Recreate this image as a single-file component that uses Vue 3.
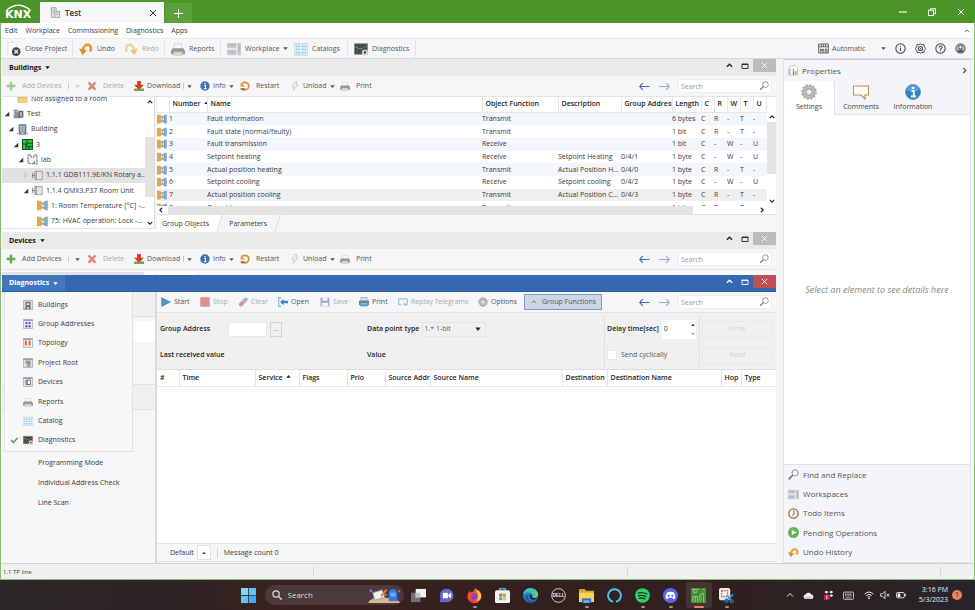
<script setup>
import { ref } from 'vue'

const ribbon = [
  { icon: 'close-project', label: 'Close Project', line: true },
  { icon: 'undo', label: 'Undo' },
  { icon: 'redo', label: 'Redo', off: true, line: true },
  { icon: 'printer', label: 'Reports', line: true },
  { icon: 'workspace', label: 'Workplace', drop: true },
  { icon: 'catalog', label: 'Catalogs', line: true },
  { icon: 'scope', label: 'Diagnostics', line: true },
]
const deviceTools = (canAdd) => [
  { icon: 'plus', label: 'Add Devices', off: !canAdd, split: true },
  { icon: 'delete', label: 'Delete', off: true },
  { icon: 'download', label: 'Download', split: true, tight: true },
  { icon: 'info', label: 'Info', drop: true, tight: true },
  { icon: 'restart', label: 'Restart' },
  { icon: 'bolt', label: 'Unload', drop: true, tight: true },
  { icon: 'printer', label: 'Print' },
]
const monitorTools = [
  { icon: 'play', label: 'Start', tight: true },
  { icon: 'stop', label: 'Stop', off: true, tight: true },
  { icon: 'eraser', label: 'Clear', off: true, tight: true },
  { icon: 'open', label: 'Open', tight: true },
  { icon: 'save', label: 'Save', off: true, tight: true },
  { icon: 'print-blue', label: 'Print', tight: true },
  { icon: 'replay', label: 'Replay Telegrams', off: true, tight: true },
  { icon: 'gear', label: 'Options', tight: true },
]
const tree = [
  { level: 1, icon: 'folder', label: 'Not assigned to a room' },
  { level: 0, icon: 'project', label: 'Test', state: 'open' },
  { level: 1, icon: 'building', label: 'Building', state: 'open' },
  { level: 2, icon: 'floor', label: '3', state: 'open' },
  { level: 3, icon: 'room', label: 'lab', state: 'open' },
  { level: 4, icon: 'device', label: '1.1.1 GDB111.9E/KN Rotary a...', state: 'closed', picked: true },
  { level: 4, icon: 'device', label: '1.1.4 QMX3.P37 Room Unit', state: 'open' },
  { level: 5, icon: 'object', label: '1: Room Temperature [°C] -...' },
  { level: 5, icon: 'object', label: '75: HVAC operation: Lock -...' },
]
const objects = [
  ['1', 'Fault information', 'Transmit', '', '', '6 bytes', 'C', 'R', '-', 'T', '-'],
  ['2', 'Fault state (normal/faulty)', 'Transmit', '', '', '1 bit', 'C', 'R', '-', 'T', '-'],
  ['3', 'Fault transmission', 'Receive', '', '', '1 bit', 'C', '-', 'W', '-', 'U'],
  ['4', 'Setpoint heating', 'Receive', 'Setpoint Heating', '0/4/1', '1 byte', 'C', '-', 'W', '-', 'U'],
  ['5', 'Actual position heating', 'Transmit', 'Actual Position H...', '0/4/0', '1 byte', 'C', 'R', '-', 'T', '-'],
  ['6', 'Setpoint cooling', 'Receive', 'Setpoint cooling', '0/4/2', '1 byte', 'C', '-', 'W', '-', 'U'],
  ['7', 'Actual position cooling', 'Transmit', 'Actual Position C...', '0/4/3', '1 byte', 'C', 'R', '-', 'T', '-'],
  ['8', 'Override', 'Transmit', '', '', '1 bit', 'C', 'R', '-', 'T', '-'],
]
const objectHeads = ['Number', 'Name', 'Object Function', 'Description', 'Group Address', 'Length', 'C', 'R', 'W', 'T', 'U']
const objectCols = ['w-icon', 'w-num', '', 'w-func', 'w-desc', 'w-addr', 'w-len', 'w-flag', 'w-flag', 'w-flag', 'w-flag', 'w-flag', 'w-rest']
const busHeads = [
  ['#', 'b-idx'], ['Time', 'b-time'], ['Service', 'b-serv'], ['Flags', 'b-flags'], ['Prio', 'b-prio'],
  ['Source Address', 'b-addr'], ['Source Name', 'b-name'], ['Destination', 'b-addr'],
  ['Destination Name', ''], ['Hop', 'b-hop'], ['Type', 'b-type'],
]
const views = [
  ['v-buildings', 'Buildings'], ['v-groups', 'Group Addresses'], ['v-topology', 'Topology'], ['v-root', 'Project Root'],
  ['v-devices', 'Devices'], ['printer', 'Reports'], ['catalog', 'Catalog'], ['scope', 'Diagnostics'],
]
const sideTabs = [['gear', 'Settings'], ['comment', 'Comments'], ['info-ball', 'Information']]
const sideLinks = [
  ['magnifier', 'Find and Replace'], ['workspace', 'Workspaces'], ['clock', 'Todo Items'],
  ['pending', 'Pending Operations'], ['undo', 'Undo History'],
]
const apps = [
  ['t-tasks', ''], ['t-chat', ''], ['t-firefox', 'run'], ['t-store', ''], ['t-edge', ''], ['t-dell', ''],
  ['t-files', 'run'], ['t-ring', ''], ['t-spotify', 'run'], ['t-discord', 'run'], ['t-ets', 'front'], ['t-snip', 'run'],
]
const delay = ref('0')
const groupAddress = ref('')
</script>

<template>
  <svg class="sprites" aria-hidden="true">
    <symbol id="close-project" viewBox="0 0 16 16"><path d="M1 .5h7l3 3V14H1z" fill="#fff" stroke="#dcdcdc"/><circle cx="10.500" cy="11" r="5" fill="#484848"/><path d="M8.500 9l4 4m0-4l-4 4" stroke="#fff" stroke-width="1.500"/></symbol>
    <symbol id="undo" viewBox="0 0 16 16"><path d="M4.500 9C5 4.500 8 2.500 11 3.500c3 1 3.500 4 1.500 7.500" fill="none" stroke="#e59a35" stroke-width="3"/><path d="M0 7.500l9 1.800L4 15z" fill="#df8f2c"/><path d="M4 6.500C5.500 2.500 9 1 12 2.200" fill="none" stroke="#f2bd6c"/></symbol>
    <symbol id="redo" viewBox="0 0 16 16"><path d="M11.500 9C11 4.500 8 2.500 5 3.500 2 4.500 1.500 7.500 3.500 11" fill="none" stroke="#f4d3a6" stroke-width="3"/><path d="M16 7.500L7 9.300 12 15z" fill="#eec28a"/></symbol>
    <symbol id="printer" viewBox="0 0 16 16"><path d="M4 2h8l1 6H3z" fill="#f8f8f8" stroke="#c4c4c4" stroke-width=".7"/><path d="M2 7h12l2 3v4h-3v-3H3v3H0v-4z" fill="#989898"/><path d="M4 12h8l1 3H3z" fill="#e2e2e2" stroke="#a5a5a5" stroke-width=".6"/><path d="M12 8.500h2" stroke="#69a869"/></symbol>
    <symbol id="workspace" viewBox="0 0 16 16"><path d="M0 1h11v6H0zM0 8.500h11V15H0zM12 1h4v14h-4z" fill="#c9cbcd"/><path d="M2 3.500h7M2 11.500h7M13.500 3v9" stroke="#a3a6a9"/></symbol>
    <symbol id="catalog" viewBox="0 0 16 16"><path d="M0 2h7l1 1 1-1h7v13H9l-1-1-1 1H0z" fill="#e6f4fb" stroke="#a8bcc8" stroke-width=".8"/><path d="M2 4h2v2H2zm3 0h2v2H5zM2 7.500h2v2H2zm3 0h2v2H5zM2 11h2v2H2zm3 0h2v2H5zm4-7h2v2H9zm3 0h2v2h-2zM9 7.500h2v2H9zm3 0h2v2h-2zM9 11h2v2H9zm3 0h2v2h-2z" fill="#85caef"/></symbol>
    <symbol id="scope" viewBox="0 0 16 16"><path d="M.5 2h15v12H.5z" fill="#3f4341" stroke="#888"/><path d="M1 10h14M4 3v10M8 3v10" stroke="#656a66" stroke-width=".6"/><path d="M1 7l2-2 2 3 2-1 2 1 3-3 3 1" fill="none" stroke="#66b35b"/><circle cx="12.500" cy="12" r="3.500" fill="#d5d5d5"/><circle cx="12.500" cy="12" r="1.300" fill="#333"/></symbol>
    <symbol id="plus" viewBox="0 0 16 16"><path d="M6 1h4v5h5v4h-5v5H6v-5H1V6h5z" fill="#62ad4a"/></symbol>
    <symbol id="delete" viewBox="0 0 16 16"><path d="M1 3l3-2 4 4 4-4 3 2-4 5 4 5-3 2-4-4-4 4-3-2 4-5z" fill="#d83e2b"/></symbol>
    <symbol id="download" viewBox="0 0 16 16"><path d="M0 12h16v4H0z" fill="#7ba548"/><path d="M5 0h6v6h5l-8 8-8-8h5z" fill="#d93a24"/></symbol>
    <symbol id="info" viewBox="0 0 16 16"><circle cx="8" cy="8" r="7.500" fill="#3f70b7"/><path d="M6.500 7h2.300v5M6 12.300h4.500M7 4h2" stroke="#fff" stroke-width="1.700" fill="none"/></symbol>
    <symbol id="restart" viewBox="0 0 16 16"><path d="M3 4.500C6 1 13 1.500 14 7c.5 4-2 7-6 7" fill="none" stroke="#d89443" stroke-width="2.800"/><path d="M1 2v7h7z" fill="#e0a04f"/><path d="M1 11h7v4H3l-2-1z" fill="#b5762f"/></symbol>
    <symbol id="bolt" viewBox="0 0 16 16"><path d="M7 1L3 9h4l-2 6 8-9H9l2-5z" fill="#f6f7f8" stroke="#b4b8bb"/></symbol>
    <symbol id="play" viewBox="0 0 16 16"><path d="M1 1l14 7-14 7z" fill="#4a97c9" stroke="#3d80b0"/></symbol>
    <symbol id="stop" viewBox="0 0 16 16"><path d="M1 1h14v14H1z" fill="#d64950" stroke="#b94b50"/></symbol>
    <symbol id="eraser" viewBox="0 0 16 16"><path d="M1 11l5-5 5 4-5 5H3z" fill="#d45450"/><path d="M6 6l5-5h3l2 3-5 6z" fill="#5c8cc0"/></symbol>
    <symbol id="open" viewBox="0 0 16 16"><path d="M5 1H1v14h4" fill="none" stroke="#8cbce2" stroke-width="2"/><path d="M3.500 8L9 3v3h7v4H9v3z" fill="#3d82b8"/></symbol>
    <symbol id="save" viewBox="0 0 16 16"><path d="M1 1h13l1 1v13H1z" fill="#6470b9"/><path d="M4 1h8v5H4zM3 9h10v6H3z" fill="#f3f4fa"/></symbol>
    <symbol id="print-blue" viewBox="0 0 16 16"><path d="M3 1h10v5H3z" fill="#dde8ee" stroke="#7891a0"/><path d="M0 6h16v7H0z" fill="#6b7e8b"/><path d="M2 9h12v6H2z" fill="#4b9dc9"/><path d="M3 11h10" stroke="#d7edf8"/></symbol>
    <symbol id="replay" viewBox="0 0 16 16"><path d="M5 12H2q-1 0-1-1V4q0-1 1-1h12q1 0 1 1v7q0 1-1 1h-3" fill="none" stroke="#62add6" stroke-width="2"/><path d="M12 8v7l-4-3z" fill="#62add6"/></symbol>
    <symbol id="gear" viewBox="0 0 16 16"><circle cx="8" cy="8" r="7" fill="none" stroke="#a5a5a5" stroke-width="1.600" stroke-dasharray="2.200 1.465"/><circle cx="8" cy="8" r="4.600" fill="none" stroke="#a9a9a9" stroke-width="4"/><circle cx="8" cy="8" r="4.600" fill="none" stroke="#c4c4c4" stroke-width="1.400"/><circle cx="8" cy="8" r="2.500" fill="#fafafa" stroke="#9a9a9a" stroke-width=".6"/></symbol>
    <symbol id="comment" viewBox="0 0 16 16"><path d="M.5 2h15v9H12v4l-4-4H.5z" fill="#fffaf0" stroke="#bd8b58" stroke-width="1.100"/></symbol>
    <symbol id="info-ball" viewBox="0 0 16 16"><circle cx="8" cy="8" r="7.500" fill="#2f83c7" stroke="#6f98ba"/><path d="M2 6a6.300 6.300 0 0112 0q-6 3-12 0z" fill="#5aa3d8"/><path d="M6.500 7h2.300v5.500M6 12.500h5" stroke="#fff" stroke-width="1.800" fill="none"/><circle cx="8" cy="4" r="1.300" fill="#fff"/></symbol>
    <symbol id="magnifier" viewBox="0 0 16 16"><circle cx="10.300" cy="5.700" r="4.500" fill="#f7f8f8" stroke="#8c827c" stroke-width="1.300"/><path d="M7 9l-6 6" stroke="#927a66" stroke-width="2.500"/></symbol>
    <symbol id="search" viewBox="0 0 16 16"><circle cx="10.300" cy="5.700" r="4.500" fill="none" stroke="#777" stroke-width="1.200"/><path d="M7 9l-5 5" stroke="#777" stroke-width="2"/></symbol>
    <symbol id="clock" viewBox="0 0 16 16"><circle cx="8" cy="8" r="6.800" fill="#faf5e6" stroke="#947449" stroke-width="2"/><path d="M8.500 3.500V9L6 11" fill="none" stroke="#6e5a40" stroke-width="1.300"/></symbol>
    <symbol id="pending" viewBox="0 0 16 16"><circle cx="8" cy="8" r="8" fill="#68b25e"/><path d="M5.500 4.500l7 3.500-7 3.500z" fill="#fff"/></symbol>
    <symbol id="props" viewBox="0 0 16 16"><path d="M3 1h8l3 3v11H3z" fill="#fbfbfb" stroke="#bbb"/><path d="M0 5h4v10H0z" fill="#c5cbd1"/><path d="M7 6h2v2H7zm0 3h2v5H7z" fill="#3b7fc0"/><path d="M10 9h3v5h-3z" fill="#d8a965"/></symbol>
    <symbol id="folder" viewBox="0 0 16 16"><path d="M1 3h5l2 2h7v9H1z" fill="#e2ae52"/><path d="M4 7h12l-2 8H1z" fill="#f4cf86"/></symbol>
    <symbol id="project" viewBox="0 0 16 16"><path d="M1 2h6v4h3v9H1z" fill="#8e9295"/><path d="M2 4h1v2H2zm3 0h1v2H5zM2 8h1v2H2z" fill="#e1e5e8"/><path d="M8 4h7v10H8z" fill="#59616a"/><path d="M10 6h3v6h-3z" fill="#a9c4b6"/></symbol>
    <symbol id="building" viewBox="0 0 16 16"><path d="M3 1h10v14H3z" fill="#7e8da0" stroke="#5e6a78"/><path d="M5 3h2v2H5zm4 0h2v2H9zM5 6h2v2H5zm4 0h2v2H9zM5 9h2v2H5zm4 0h2v2H9zM7 12h2v3H7z" fill="#dfe8f2"/><path d="M0 13h2v2H0zm14 0h2v2h-2z" fill="#79b27c"/></symbol>
    <symbol id="floor" viewBox="0 0 16 16"><path d="M0 0h16v16H0z" fill="#125a20"/><path d="M1.500 1.500h5v5h-5zm6.500 0h6.500v4H8zM1.500 8H5v6.500H1.500zM8 7h6.500v3H8zm-1.500 5h3v2.500h-3zm5 0h3v2.500h-3z" fill="#32c04a"/></symbol>
    <symbol id="room" viewBox="0 0 16 16"><path d="M1.500 1.500H6v3h4v-3h4.500v13H11v-3l-3 3-6.500-1z" fill="#f1f1f1" stroke="#777" stroke-width="1.500" stroke-dasharray="4 1"/></symbol>
    <symbol id="device" viewBox="0 0 16 16"><path d="M4 2h11v12H4z" fill="#e3e3e3" stroke="#8b8b8b"/><path d="M1 4v8M4 8H0M6 2v12" stroke="#777" stroke-width="1.300"/></symbol>
    <symbol id="object" viewBox="0 0 16 16"><path d="M0 1h6v2h3v3H7v4h2v3H6v2H0z" fill="#e0a84a"/><path d="M16 1h-4l-3 3v2h2v4H9v2l3 3h4z" fill="#8fb0d8"/><path d="M9 4v8M12 2v12" stroke="#6485b4"/></symbol>
    <symbol id="v-buildings" viewBox="0 0 16 16"><path d="M.5 1h15v14H.5z" fill="#d9dbdd" stroke="#8c9196"/><path d="M4 3h8v12H4z" fill="#6c727a"/><path d="M6 5h4v3H6zm1 6h2v4H7z" fill="#e8edf1"/><path d="M1 13h3v2H1z" fill="#71a876"/></symbol>
    <symbol id="v-groups" viewBox="0 0 16 16"><path d="M.5 1h15v14H.5z" fill="#eef0fb" stroke="#8c9196"/><path d="M.5 1h15v2H.5z" fill="#8c98ae"/><path d="M4 5h3v3H4zm5 0h3v3H9zm-5 5h3v3H4zm5 0h3v3H9z" fill="#3237e2"/></symbol>
    <symbol id="v-topology" viewBox="0 0 16 16"><path d="M.5 1h15v14H.5z" fill="#f3eeee" stroke="#8c9196"/><path d="M.5 1h15v2H.5z" fill="#8c98ae"/><path d="M3 4h3v8H3zm6 0h3v8H9z" fill="#e2622d"/></symbol>
    <symbol id="v-root" viewBox="0 0 16 16"><path d="M.5 1h15v14H.5z" fill="#dfe1e3" stroke="#8c9196"/><path d="M.5 1h15v2H.5z" fill="#8c98ae"/><path d="M4 5h8M4 7h8M6 9h6M6 11h6M6 13h6" stroke="#5f6469" stroke-width="1.200"/></symbol>
    <symbol id="v-devices" viewBox="0 0 16 16"><path d="M.5 1h15v14H.5z" fill="#e8e9ea" stroke="#8c9196"/><path d="M.5 1h15v2H.5z" fill="#8c98ae"/><path d="M5 5h7v7H5zM5 8H3M7 5v7" fill="#fff" stroke="#4b4f53" stroke-width="1.200"/></symbol>
    <symbol id="check" viewBox="0 0 16 16"><path d="M2 8l5 5L15 4" fill="none" stroke="#4d9d38" stroke-width="3"/></symbol>
    <symbol id="arrow-left" viewBox="0 0 16 16"><path d="M15.500 8H1m4.500-5L1 8l4.500 5" fill="none" stroke="#3c6dbb" stroke-width="1.700"/></symbol>
    <symbol id="arrow-right" viewBox="0 0 16 16"><path d="M.5 8H15m-4.500-5L15 8l-4.500 5" fill="none" stroke="#8da9d8" stroke-width="1.700"/></symbol>
    <symbol id="chevron-up" viewBox="0 0 16 16"><path d="M2 11l6-6 6 6" fill="none" stroke="currentColor" stroke-width="3"/></symbol>
    <symbol id="chevron-thin" viewBox="0 0 16 16"><path d="M2 11l6-6 6 6" fill="none" stroke="currentColor" stroke-width="2"/></symbol>
    <symbol id="chevron-right" viewBox="0 0 16 16"><path d="M5 2l6 6-6 6" fill="none" stroke="currentColor" stroke-width="3"/></symbol>
    <symbol id="chevron-left" viewBox="0 0 16 16"><path d="M11 2L5 8l6 6" fill="none" stroke="currentColor" stroke-width="3"/></symbol>
    <symbol id="chevron-down" viewBox="0 0 16 16"><path d="M2 5l6 6 6-6" fill="none" stroke="currentColor" stroke-width="3"/></symbol>
    <symbol id="box" viewBox="0 0 16 16"><path d="M2 4h12v9H2zM2 5h12" fill="none" stroke="currentColor" stroke-width="1.800"/></symbol>
    <symbol id="cross" viewBox="0 0 16 16"><path d="M2 2l12 12M14 2L2 14" stroke="currentColor" stroke-width="2"/></symbol>
    <symbol id="tri-down" viewBox="0 0 16 16"><path d="M1 4h14l-7 9z" fill="currentColor"/></symbol>
    <symbol id="tri-up" viewBox="0 0 16 16"><path d="M1 12h14L8 3z" fill="currentColor"/></symbol>
    <symbol id="node-open" viewBox="0 0 16 16"><path d="M14 2v12H2z" fill="#333"/></symbol>
    <symbol id="node-closed" viewBox="0 0 16 16"><path d="M4 2l8 6-8 6z" fill="none" stroke="#bbb" stroke-width="1.500"/></symbol>
    <symbol id="minimize" viewBox="0 0 16 16"><path d="M0 8h16" stroke="#e5f0df" stroke-width="2.500"/></symbol>
    <symbol id="restore" viewBox="0 0 16 16"><path d="M1 4.500h10V15H1zM5 4V1.500h10v10h-3" fill="none" stroke="#f1f7ee" stroke-width="2.200"/></symbol>
    <symbol id="tab-doc" viewBox="0 0 16 16"><path d="M2 15V1h7v4M2 15h12V6H7v9" fill="#e4e4e4" stroke="#999" stroke-width="1.200"/><path d="M4 4h3M4 7h2M4 10h2m3-2h3m-3 3h3" stroke="#888"/></symbol>
    <symbol id="auto" viewBox="0 0 16 16"><path d="M1 1.500h14v13H1zM1 5.500h14M5 2v3M8 2v3M11 2v3M4 14V8.500l2 3 1.500-3V14m3 0V9h2.500v5" fill="none" stroke="#444" stroke-width="1.200"/></symbol>
    <symbol id="ring-info" viewBox="0 0 16 16"><circle cx="8" cy="8" r="6.800" fill="none" stroke="#444" stroke-width="1.500"/><path d="M8 7v5M8 4v1.600" stroke="#444" stroke-width="1.600"/></symbol>
    <symbol id="ring-gear" viewBox="0 0 16 16"><path d="M8 1l2 1.500 3-.3.500 3L15.500 8l-2 2.800-.5 3-3-.3L8 15l-2-1.500-3 .3-.5-3L.5 8l2-2.800.5-3 3 .3z" fill="none" stroke="#444" stroke-width="1.400"/><circle cx="8" cy="8" r="3" fill="none" stroke="#444" stroke-width="1.500"/><circle cx="8" cy="8" r="1" fill="#555"/></symbol>
    <symbol id="ring-help" viewBox="0 0 16 16"><circle cx="8" cy="8" r="6.800" fill="none" stroke="#444" stroke-width="1.500"/><path d="M5.800 6.500c0-3 4.500-3 4.500-.3C10.300 8 8 8 8 9.800M8 11v1.500" fill="none" stroke="#444" stroke-width="1.500"/></symbol>
    <symbol id="ring-user" viewBox="0 0 16 16"><circle cx="8" cy="8" r="7" fill="#999" stroke="#555"/><path d="M3.500 13.500c0-5 9-5 9 0z" fill="#555"/><circle cx="8" cy="6" r="2.500" fill="#eee" stroke="#444"/><path d="M3.500 5v5M12.500 5v5" stroke="#ddd"/></symbol>

    <symbol id="t-start" viewBox="0 0 16 16"><path d="M0 0h7.600v7.600H0z" fill="#7fd6fb"/><path d="M8.400 0H16v7.600H8.400zM0 8.400h7.600V16H0z" fill="#5fc3f7"/><path d="M8.400 8.400H16V16H8.400z" fill="#40a7f0"/></symbol>
    <symbol id="t-search" viewBox="0 0 16 16"><circle cx="6.500" cy="6.500" r="5" fill="none" stroke="#e0dada" stroke-width="2"/><path d="M10.500 10.500l5 5" stroke="#e0dada" stroke-width="2.200"/></symbol>
    <symbol id="t-art" viewBox="0 0 36 16"><path d="M0 15q7-6 14-4 9-2 19 3l1 2H1z" fill="#dcb98c"/><path d="M5 5l10-3 3 8-11 3z" fill="#eef1ef" stroke="#8ba08e"/><path d="M13 8l6-7 1.500 1.500-6 7z" fill="#ec7c3e"/><path d="M22 6q0-4 3-5h3q3 1 3 5v8h-9z" fill="#3279ec"/><path d="M24 5h5v4h-5z" fill="#70b0f9"/><path d="M1 3l2-2 2 2-2 2z" fill="#b35ae0"/><path d="M32 2l2 1-1 2z" fill="#e9a93c"/><circle cx="19" cy="7" r="1" fill="#59c7e8"/></symbol>
    <symbol id="t-tasks" viewBox="0 0 16 16"><path d="M0 5h10v10H0z" fill="#747171"/><path d="M5 1h11v9H5z" fill="#f3f3f3"/><path d="M5 5h5v5H5z" fill="#c2c1c1"/></symbol>
    <symbol id="t-chat" viewBox="0 0 16 16"><path d="M1 15l.5-4A7.300 7.300 0 118 15.300z" fill="#6767cf"/><rect x="4" y="5" width="5.500" height="6" rx="1" fill="#fff"/><path d="M10 7l3-2v6l-3-2z" fill="#fff"/></symbol>
    <symbol id="t-firefox" viewBox="0 0 16 16"><path d="M8 16C3 16 .3 12.500.5 8.500.6 6 2 4 3 3l.5 2C5 3.500 6.500 4 7 4c0-2 1-3 2.500-4 .5 2 1.500 2 2.500 3.500L13 3c2 2 2.500 4 2.500 5.500C15.500 13 12 16 8 16z" fill="#f9502f"/><path d="M10 1c3 3 5.500 4 5 8-1 5-5 6-8 5 4 0 5-3 5-5 0-3-2-4-2-8z" fill="#ffc936"/><circle cx="7.500" cy="9" r="3.500" fill="#8843c7"/><path d="M2 11c3 4 8 3 10 1-1 3-8 5-10-1z" fill="#e3266c"/></symbol>
    <symbol id="t-store" viewBox="0 0 16 16"><path d="M5 3V.8h6V3" fill="none" stroke="#4cabdd" stroke-width="1.500"/><rect y="2.500" width="16" height="13.500" rx="2" fill="#f3f3f2"/><path d="M4.500 6h3.200v3.200H4.500z" fill="#ec5330"/><path d="M8.300 6h3.200v3.200H8.300z" fill="#80bc2b"/><path d="M4.500 9.800h3.200V13H4.500z" fill="#32a6e8"/><path d="M8.300 9.800h3.200V13H8.300z" fill="#fbbc27"/></symbol>
    <symbol id="t-edge" viewBox="0 0 16 16"><circle cx="8" cy="8" r="8" fill="#1982c9"/><path d="M0 7C1 1 6 0 8 0c5 0 8 4 8 7 0 2-2 4-5 3-2 0-2-1-1-2 0-3-5-5-10-1z" fill="#3cc3b4"/><path d="M12 1c3 2 4 4 4 6 0 3-3 4-5 3 3-2 2-6 1-9z" fill="#68d75a"/><path d="M6 7c-2 4 1 9 8 6-3 4-9 4-11-1-.5-3 1-4 3-5z" fill="#105ba6"/><path d="M8 7c1-.5 2 0 2 1-1 1-1 2 1 2.500 1 .5 3 0 4-.5-1 2-3 3-5 2.500C7 12 6.500 8.500 8 7z" fill="#332321"/></symbol>
    <symbol id="t-dell" viewBox="0 0 16 16"><circle cx="8" cy="8" r="7.300" fill="none" stroke="#ddd6d4" stroke-width="1"/><text x="8" y="9.700" text-anchor="middle" font-family="Liberation Sans" font-size="5" font-weight="700" fill="#eee">DELL</text></symbol>
    <symbol id="t-files" viewBox="0 0 16 16"><path d="M0 2q0-1 1-1h5l1.500 2H16v12H0z" fill="#dca432"/><path d="M0 5h16v10H0z" fill="#ffd44d"/><path d="M3 11h10v5H3z" fill="#2978c7"/><path d="M5 13h6v3H5z" fill="#66b1ec"/></symbol>
    <symbol id="t-ring" viewBox="0 0 16 16"><path d="M6.500 14.700a6.800 6.800 0 113 0" fill="none" stroke="#51c3f2" stroke-width="2"/></symbol>
    <symbol id="t-spotify" viewBox="0 0 16 16"><circle cx="8" cy="8" r="7.800" fill="#2fd266"/><path d="M3 5.500q5-1.500 10 1M3.500 8.300q4.500-1.300 8.500 1M4 11q4-1 7 1" fill="none" stroke="#16371e" stroke-width="1.500"/></symbol>
    <symbol id="t-discord" viewBox="0 0 16 16"><circle cx="8" cy="8" r="8" fill="#5d65ee"/><path d="M4.500 4.500Q8 3.500 11.500 4.500q2 3 1.700 6.500l-2.200 1-1-1.500H6L5 12l-2.200-1Q2.500 7.500 4.500 4.500z" fill="#fff"/><circle cx="6" cy="8" r="1.200" fill="#5d65ee"/><circle cx="10" cy="8" r="1.200" fill="#5d65ee"/></symbol>
    <symbol id="t-ets" viewBox="0 0 16 16"><path d="M0 0h16v16H0z" fill="#3f8f30"/><path d="M1 1.500h7M3 1.500V5h3V3M9.500 15V7l4-1.500V15M2 15V9h5v6M4.500 9v6M11 9v1m0 2v1M13 1l2 2" fill="none" stroke="#a5d298" stroke-width=".9"/></symbol>
    <symbol id="t-snip" viewBox="0 0 16 16"><rect width="12" height="13" rx="2" fill="#ececec"/><path d="M3 3h6v6H3z" fill="#fff" stroke="#d55b49" stroke-width="1.500" stroke-dasharray="1.500 1"/><path d="M15 7l-7 6M9 8l4 6" stroke="#4aa0dc" stroke-width="1.600"/><circle cx="8" cy="13.500" r="1.700" fill="none" stroke="#2b77bb" stroke-width="1.200"/><circle cx="13.500" cy="14" r="1.500" fill="none" stroke="#2b77bb" stroke-width="1.200"/></symbol>
    <symbol id="y-cloud" viewBox="0 0 16 16"><path d="M3.500 13a3.200 3.200 0 010-6.300A5 5 0 0112 6a3.700 3.700 0 011 7z" fill="#eee"/><path d="M2 12q5-6 12 0l-1 1H3z" fill="#c9c9c9"/></symbol>
    <symbol id="y-dropbox" viewBox="0 0 16 16"><path d="M5 1l3 2-3 2-3-2zm7 0l3 2-3 2-3-2zm0 5l3 2-3 2-3-2z" fill="#f3f3f3"/><circle cx="5.500" cy="10.500" r="4.500" fill="#d91c3f"/><path d="M5.500 8v5" stroke="#fff" stroke-width="1.300"/></symbol>
    <symbol id="y-keyboard" viewBox="0 0 16 16"><rect x=".7" y="3" width="14.600" height="10.500" rx="1" fill="none" stroke="#d7d0d0" stroke-width="1.300"/><path d="M3 6h10M3 8.500h10" stroke="#d7d0d0" stroke-width="1.500" stroke-dasharray="1.500 .8"/><path d="M4 11.300h8" stroke="#d7d0d0"/></symbol>
    <symbol id="y-wifi" viewBox="0 0 16 16"><path d="M1 6.500q7-6.500 14 0M3.500 9q4.500-4.500 9 0M6 11.500q2-2 4 0" fill="none" stroke="#ece7e7" stroke-width="1.600"/><circle cx="8" cy="13.500" r="1.300" fill="#fff"/></symbol>
    <symbol id="y-mute" viewBox="0 0 16 16"><path d="M1 6h3l4-4v12l-4-4H1z" fill="none" stroke="#ece7e7" stroke-width="1.400"/><path d="M10.500 6l4.500 4.500m0-4.500l-4.500 4.500" stroke="#ece7e7" stroke-width="1.500"/></symbol>
    <symbol id="y-battery" viewBox="0 0 16 16"><rect x=".7" y="4" width="12.600" height="8.500" rx="2" fill="none" stroke="#eee" stroke-width="1.400"/><path d="M2.500 5.500H7V11H2.500zM14 6.500h1.700v3.500H14z" fill="#fff"/></symbol>
  </svg>

  <div class="screen">
    <header class="titlebar">
      <div class="logo">
        <svg class="logo-arc" viewBox="0 0 28 6"><path d="M2 6Q14-3.500 26 6" fill="none" stroke="#fff" stroke-width="1.500"/></svg>
        <span>KNX</span>
      </div>
      <div class="doc-tab">
        <svg class="i11"><use href="#tab-doc"/></svg>
        <span>Test</span>
        <button class="bare" aria-label="Close tab"><svg class="i8"><use href="#cross"/></svg></button>
      </div>
      <button class="new-tab" aria-label="New tab"><svg viewBox="0 0 10 10"><path d="M5 0v10M0 5h10" stroke="#fff" stroke-width="1.200"/></svg></button>
      <div class="win-buttons">
        <button class="bare" aria-label="Minimize"><svg class="i8"><use href="#minimize"/></svg></button>
        <button class="bare" aria-label="Restore"><svg class="i8"><use href="#restore"/></svg></button>
        <button class="bare" aria-label="Close"><svg class="i8"><use href="#cross"/></svg></button>
      </div>
    </header>

    <div class="window">
      <nav class="menubar">
        <a v-for="m in ['Edit', 'Workplace', 'Commissioning', 'Diagnostics', 'Apps']" :key="m" href="#">{{ m }}</a>
        <button class="bare push" aria-label="Collapse ribbon"><svg class="i6"><use href="#chevron-thin"/></svg></button>
      </nav>

      <div class="ribbon">
        <div class="ribbon-items">
          <button v-for="r in ribbon" :key="r.label" :class="{ off: r.off, line: r.line }">
            <svg class="i14"><use :href="'#' + r.icon"/></svg>{{ r.label }}
            <svg v-if="r.drop" class="i5"><use href="#tri-down"/></svg>
          </button>
        </div>
        <div class="ribbon-right">
          <button class="auto"><svg class="i11"><use href="#auto"/></svg>Automatic<svg class="i5 push"><use href="#tri-down"/></svg></button>
          <button v-for="g in [['ring-info', 'About'], ['ring-gear', 'Settings'], ['ring-help', 'Help'], ['ring-user', 'Account']]" :key="g[0]" class="bare" :aria-label="g[1]"><svg class="i11"><use :href="'#' + g[0]"/></svg></button>
        </div>
      </div>

      <main class="workspace">
        <div class="docks">
          <template v-for="dock in ['Buildings', 'Devices']" :key="dock">
            <section class="dock">
              <div class="dock-head">
                <button class="dock-title">{{ dock }}<svg class="i5"><use href="#tri-down"/></svg></button>
                <div class="dock-buttons">
                  <button aria-label="Collapse"><svg class="i7"><use href="#chevron-up"/></svg></button>
                  <button aria-label="Maximize"><svg class="i8"><use href="#box"/></svg></button>
                  <button class="x" aria-label="Close panel"><svg class="i7"><use href="#cross"/></svg></button>
                </div>
              </div>
              <div class="tools">
                <div class="tool-items device-tools">
                  <button v-for="t in deviceTools(dock === 'Devices')" :key="t.label" :class="{ off: t.off, tight: t.tight }">
                    <svg class="i10"><use :href="'#' + t.icon"/></svg>{{ t.label }}
                    <i v-if="t.split" class="split"></i>
                    <svg v-if="t.split || t.drop" class="i5"><use href="#tri-down"/></svg>
                  </button>
                </div>
                <div class="finder">
                  <button class="bare" aria-label="Back"><svg class="i11"><use href="#arrow-left"/></svg></button>
                  <button class="bare" aria-label="Forward"><svg class="i11"><use href="#arrow-right"/></svg></button>
                  <label class="search"><input type="text" placeholder="Search" :aria-label="'Search ' + dock"><svg class="i10"><use href="#search"/></svg></label>
                </div>
              </div>

              <div v-if="dock === 'Buildings'" class="split-view">
                <div class="tree-pane">
                  <div class="tree">
                    <div v-for="n in tree" :key="n.label" :class="['node', 'lv' + n.level, { picked: n.picked }]">
                      <svg class="i6"><use v-if="n.state" :href="'#node-' + n.state"/></svg>
                      <svg class="i11"><use :href="'#' + n.icon"/></svg>
                      <span>{{ n.label }}</span>
                    </div>
                  </div>
                  <div class="vbar"><svg class="i6"><use href="#chevron-up"/></svg><i class="tree-thumb"></i><svg class="i6"><use href="#chevron-down"/></svg></div>
                </div>
                <div class="objects-pane">
                  <div class="objects">
                    <table>
                      <colgroup><col v-for="(c, i) in objectCols" :key="i" :class="c"></colgroup>
                      <thead>
                        <tr><th></th><th v-for="h in objectHeads" :key="h" scope="col">{{ h }}<svg v-if="h === 'Number'" class="i4"><use href="#tri-up"/></svg></th><th></th></tr>
                      </thead>
                      <tbody>
                        <tr v-for="o in objects" :key="o[0]">
                          <td><svg class="i10"><use href="#object"/></svg></td>
                          <td v-for="(v, i) in o" :key="i">{{ v }}</td>
                          <td></td>
                        </tr>
                      </tbody>
                    </table>
                    <div class="vbar over"><svg class="i6"><use href="#chevron-up"/></svg><i class="table-thumb"></i><svg class="i6"><use href="#chevron-down"/></svg></div>
                  </div>
                  <div class="hbar"><svg class="i6"><use href="#chevron-left"/></svg><i></i><svg class="i6"><use href="#chevron-right"/></svg></div>
                  <div class="sheet-tabs">
                    <button class="on">Group Objects</button>
                    <svg viewBox="0 0 8 17"><path d="M0 0h7L2 17H0z" fill="#fff"/><path d="M7 0L2 17" stroke="#ddd"/></svg>
                    <button>Parameters</button>
                    <svg viewBox="0 0 8 17"><path d="M7 0L2 17" stroke="#ddd"/></svg>
                  </div>
                </div>
              </div>
              <div v-else class="peek"><i class="peek-tree"></i><i class="peek-bar"></i><i class="peek-tab"></i></div>
            </section>
          </template>

          <section class="dock active">
            <div class="dock-head">
              <button class="dock-title">Diagnostics<svg class="i5"><use href="#tri-down"/></svg></button>
              <div class="dock-buttons">
                <button aria-label="Collapse"><svg class="i7"><use href="#chevron-up"/></svg></button>
                <button aria-label="Maximize"><svg class="i8"><use href="#box"/></svg></button>
                <button class="x" aria-label="Close panel"><svg class="i7"><use href="#cross"/></svg></button>
              </div>
            </div>
            <div class="view-menu">
              <button v-for="v in views" :key="v[1]">
                <span class="tick"><svg v-if="v[1] === 'Diagnostics'" class="i8"><use href="#check"/></svg></span>
                <svg class="i10"><use :href="'#' + v[0]"/></svg>{{ v[1] }}
              </button>
            </div>
            <div class="diag">
              <aside class="diag-nav">
                <div class="nav-head"></div>
                <div class="nav-pick"></div>
                <div class="nav-gap"></div>
                <div class="nav-band"></div>
                <nav>
                  <a v-for="d in ['Programming Mode', 'Individual Address Check', 'Line Scan']" :key="d" href="#">{{ d }}</a>
                </nav>
              </aside>
              <div class="monitor">
                <div class="tools">
                  <div class="tool-items monitor-tools">
                    <button v-for="t in monitorTools" :key="t.label" :class="{ off: t.off, tight: t.tight }">
                      <svg class="i10"><use :href="'#' + t.icon"/></svg>{{ t.label }}
                    </button>
                    <button class="toggle"><svg class="i6"><use href="#chevron-thin"/></svg>Group Functions</button>
                  </div>
                  <div class="finder">
                    <button class="bare" aria-label="Back"><svg class="i11"><use href="#arrow-left"/></svg></button>
                    <button class="bare" aria-label="Forward"><svg class="i11"><use href="#arrow-right"/></svg></button>
                    <label class="search"><input type="text" placeholder="Search" aria-label="Search telegrams"><svg class="i10"><use href="#search"/></svg></label>
                  </div>
                </div>
                <div class="params">
                  <div class="cell group"><label for="ga">Group Address</label><input id="ga" v-model="groupAddress" type="text"><button class="dots">...</button></div>
                  <div class="cell"><label for="dpt">Data point type</label>
                    <span class="select"><select id="dpt"><option>1.* 1-bit</option></select><svg class="i6"><use href="#tri-down"/></svg></span>
                  </div>
                  <div class="cell ruled"><label for="delay">Delay time[sec]</label>
                    <span class="spin"><input id="delay" v-model="delay" type="text"><span><svg class="i4"><use href="#tri-up"/></svg><svg class="i4 faint"><use href="#tri-down"/></svg></span></span>
                  </div>
                  <div class="cell ruled"><button class="ghost" disabled>Write</button></div>
                  <div class="cell"><b>Last received value</b></div>
                  <div class="cell"><b>Value</b></div>
                  <div class="cell ruled"><label class="tickbox"><input type="checkbox">Send cyclically</label></div>
                  <div class="cell ruled"><button class="ghost" disabled>Read</button></div>
                </div>
                <div class="telegrams">
                  <table>
                    <colgroup><col v-for="(c, i) in busHeads" :key="i" :class="c[1]"></colgroup>
                    <thead><tr><th v-for="h in busHeads" :key="h[0]" scope="col">{{ h[0] }}<svg v-if="h[0] === 'Service'" class="i5"><use href="#tri-up"/></svg></th></tr></thead>
                  </table>
                </div>
                <footer class="monitor-foot">
                  <label for="preset">Default</label>
                  <button id="preset" aria-label="Choose layout"><svg class="i4"><use href="#tri-up"/></svg></button>
                  <span class="count">Message count 0</span>
                </footer>
              </div>
            </div>
          </section>
        </div>

        <aside class="side">
          <div class="side-head"><svg class="i11"><use href="#props"/></svg><span>Properties</span><button class="bare push" aria-label="Collapse properties"><svg class="i7"><use href="#chevron-right"/></svg></button></div>
          <div class="side-tabs">
            <button v-for="(s, i) in sideTabs" :key="s[1]" :class="{ on: i === 0 }"><svg class="i16"><use :href="'#' + s[0]"/></svg>{{ s[1] }}</button>
          </div>
          <div class="side-body"><em>Select an element to see details here</em></div>
          <nav class="side-links">
            <a v-for="l in sideLinks" :key="l[1]" href="#"><svg class="i11"><use :href="'#' + l[0]"/></svg>{{ l[1] }}</a>
          </nav>
        </aside>
      </main>

      <div class="statusbar"><span>1.1 TP line</span><span></span><span></span><span></span></div>
    </div>

    <footer class="taskbar">
      <div class="pinned">
        <button class="bare" aria-label="Start"><svg class="i15"><use href="#t-start"/></svg></button>
        <label class="task-search"><svg class="i10"><use href="#t-search"/></svg><input type="text" placeholder="Search" aria-label="Search Windows"><svg class="art"><use href="#t-art"/></svg></label>
        <div class="apps">
          <button v-for="a in apps" :key="a[0]" :class="['app', a[1]]" :aria-label="a[0].slice(2)"><svg class="i15"><use :href="'#' + a[0]"/></svg></button>
        </div>
      </div>
      <div class="tray">
        <svg class="i8"><use href="#chevron-thin"/></svg>
        <svg class="i11"><use href="#y-cloud"/></svg>
        <svg class="i11"><use href="#y-dropbox"/></svg>
        <svg class="i11"><use href="#y-keyboard"/></svg>
        <div class="net"><svg class="i10"><use href="#y-wifi"/></svg><svg class="i10"><use href="#y-mute"/></svg><svg class="i10"><use href="#y-battery"/></svg></div>
        <div class="time"><span>3:16 PM</span><span>5/3/2023</span></div>
        <span class="badge">1</span>
      </div>
    </footer>
  </div>
</template>

<style>
body { margin: 0; background: #f4f6f8; }
</style>

<style scoped>
* { box-sizing: border-box; }
.sprites { display: none; }
svg { flex: none; display: block; }
.i4 { width: 4px; height: 4px; }
.i5 { width: 5px; height: 5px; }
.i6 { width: 6px; height: 6px; }
.i7 { width: 7px; height: 7px; }
.i8 { width: 8px; height: 8px; }
.i10 { width: 10px; height: 10px; }
.i11 { width: 11px; height: 11px; }
.i14 { width: 14px; height: 14px; }
.i15 { width: 15px; height: 15px; }
.i16 { width: 16px; height: 16px; }
button, input, select { font: inherit; color: inherit; margin: 0; padding: 0; border: 0; background: none; border-radius: 0; outline: 0; }
button { display: flex; align-items: center; white-space: nowrap; text-align: left; }
a { color: inherit; text-decoration: none; }
.push { margin-left: auto; }
.screen { min-height: 100vh; display: flex; flex-direction: column; font: 7px/10px "Open Sans", "Noto Sans", sans-serif; color: #3a3a3a; }

.titlebar { height: 23px; background: #4a9428; display: flex; align-items: flex-end; color: #fff; }
.logo { width: 40px; height: 23px; padding: 4px 0 0 5px; font: 700 11px/9px "DejaVu Sans", sans-serif; }
.logo-arc { width: 27px; height: 6px; }
.doc-tab { width: 124px; height: 21px; background: #f6f7f8; display: flex; align-items: center; gap: 4px; padding: 0 7px 0 10px; color: #333; font-size: 8px; font-weight: 600; }
.doc-tab button { margin-left: auto; }
.new-tab { width: 27px; height: 20px; margin-left: 1px; background: #5aa13b; justify-content: center; }
.new-tab svg { width: 9px; height: 9px; }
.win-buttons { margin-left: auto; height: 23px; display: flex; align-items: center; gap: 21px; padding-right: 10px; }

.window { flex: 1; display: flex; flex-direction: column; border: solid #8cba78; border-width: 0 1px 1px; background: #f2f4f6; }
.menubar { height: 15px; background: #fff; display: flex; align-items: center; gap: 8px; padding: 0 4px; }
.ribbon { height: 21px; background: #f4f6f8; border-top: 1px solid #e6e8ea; border-bottom: 1px solid #d9dadb; display: flex; justify-content: space-between; align-items: center; }
.ribbon-items { display: grid; grid-template-columns: 72px 45px 47px 56px 67px 60px 68px; height: 18px; }
.ribbon-items button { gap: 4px; padding-left: 6px; color: #555; }
.ribbon-items .line { border-right: 1px solid #e2e4e6; }
.ribbon-items .off { color: #aaa; }
.ribbon-right { display: flex; align-items: center; gap: 9px; padding-right: 8px; }
.auto { width: 68px; gap: 3px; color: #555; }

.workspace { flex: 1; display: grid; grid-template-columns: 1fr 188px; gap: 7px; padding: 0 3px 0 1px; }
.docks { display: flex; flex-direction: column; min-width: 0; }
.dock { position: relative; }
.dock-head { height: 17px; background: #eaeaea; display: flex; justify-content: space-between; }
.dock-title { padding: 0 7px; gap: 4px; font-weight: 700; color: #111; }
.dock-buttons { display: flex; height: 13px; color: #222; }
.dock-buttons button { width: 16px; justify-content: center; }
.dock-buttons .x { width: 23px; background: #bcbcbc; color: #fff; }
.tools { height: 21px; background: #f4f6f8; border-bottom: 1px solid #e2e4e6; display: flex; justify-content: space-between; align-items: center; }
.tool-items { display: grid; height: 16px; }
.tool-items button { gap: 6px; color: #555; }
.tool-items .tight { gap: 3px; }
.tool-items .off { color: #aaa; }
.tool-items .off svg { opacity: .6; }
.device-tools { grid-template-columns: 81px 47px 66px 40px 50px 50px auto; padding-left: 4px; }
.split { width: 1px; height: 6px; background: #ccc; }
.finder { display: flex; align-items: center; gap: 9px; padding-right: 4px; }
.search { width: 94px; height: 14px; background: #fff; border: 1px solid #eceef0; display: flex; align-items: center; padding: 0 2px; margin-left: -1px; }
.search input { flex: 1; min-width: 0; height: 12px; }
.search input::placeholder { color: #999; opacity: 1; }

.split-view { display: grid; grid-template-columns: 153px 1fr; height: 135px; background: #fff; }
.tree-pane { display: flex; height: 132px; overflow: hidden; border-bottom: 1px solid #e2e2e2; border-right: 1px solid #ddd; }
.tree { flex: 1; min-width: 0; height: 138px; margin-top: -6px; display: grid; grid-auto-rows: 1fr; }
.node { display: flex; align-items: center; gap: 3px; min-width: 0; white-space: nowrap; overflow: hidden; }
.lv0 { padding-left: 2px; }
.lv1 { padding-left: 6px; }
.lv2 { padding-left: 11px; }
.lv3 { padding-left: 16px; }
.lv4 { padding-left: 21px; }
.lv5 { padding-left: 26px; }
.picked { background: #e2e2e2; }
.vbar { width: 9px; display: flex; flex-direction: column; align-items: center; background: #fff; padding: 2px 0; color: #222; }
.tree-thumb { width: 9px; height: 60px; margin: 32px 0 auto; background: #e3e3e3; }
.objects-pane { min-width: 0; display: flex; flex-direction: column; padding-left: 2px; background: #f4f6f8; }
.objects { position: relative; height: 109px; overflow: hidden; background: #fff; }
.vbar.over { position: absolute; top: 15px; right: 0; bottom: 0; }
.table-thumb { width: 9px; height: 52px; margin: 2px 0 auto; background: #e3e3e3; }
table { width: 100%; table-layout: fixed; border-collapse: collapse; }
th, td { padding: 0; text-align: left; white-space: nowrap; overflow: hidden; }
th { height: 15px; padding-left: 3px; font-weight: 600; color: #222; border-right: 1px solid #e6e6e6; border-bottom: 1px solid #e6e6e6; }
th:last-child { border-right: 0; }
th svg { display: inline-block; margin-left: 3px; vertical-align: 1px; }
.objects table { height: 117px; }
.objects td { line-height: 10px; }
.objects tbody tr:nth-child(odd) { background: #f3f6fa; }
.objects tbody tr:nth-child(7) { background: #efefef; }
.objects tbody tr:nth-child(8) { background: #fff; }
.w-icon { width: 12px; }
.w-num { width: 38px; }
.w-func { width: 76px; }
.w-desc { width: 63px; }
.w-addr { width: 51px; }
.w-len { width: 29px; }
.w-flag { width: 13px; }
.w-rest { width: 10px; }
.hbar { height: 9px; background: #fff; display: flex; align-items: center; justify-content: space-between; padding: 0 11px 0 1px; color: #222; border-bottom: 1px solid #e4e4e4; }
.hbar i { flex: 1; height: 9px; margin: 0 66px 0 4px; background: #e3e3e3; }
.sheet-tabs { height: 17px; display: flex; }
.sheet-tabs button { padding: 0 6px; }
.sheet-tabs button.on { background: #fff; padding-left: 5px; }
.sheet-tabs svg { width: 8px; height: 17px; }
.peek { height: 5px; display: flex; align-items: flex-end; background: #f7f8f9; }
.peek-tree { width: 142px; height: 3px; background: #e3e3e3; }
.peek-bar { width: 9px; height: 3px; background: #fff; margin-right: 4px; }
.peek-tab { width: 40px; height: 3px; background: #fff; }

.active { flex: 1; display: flex; flex-direction: column; }
.active > .dock-head { background: #3568b2; border-bottom: 1px solid #2c5aa0; }
.active .dock-title { color: #fff; background: #3f78bf; }
.active .dock-buttons { color: #fff; height: 13px; }
.active .dock-buttons .x { background: #c05054; }
.view-menu { position: absolute; top: 17px; left: 2px; z-index: 2; width: 129px; height: 160px; padding: 3px 0 1px; background: #f7f7f7; border: 1px solid #e0e2e4; border-top: 0; display: grid; grid-auto-rows: 1fr; }
.view-menu button { gap: 5px; }
.tick { width: 13px; padding-left: 5px; }
.diag { flex: 1; display: grid; grid-template-columns: 155px 1fr; }
.diag-nav { background: #f4f6f8; border-right: 2px solid #d8dadd; }
.nav-head { height: 25px; background: #f0f0f0; border-bottom: 1px solid #dfe1e3; }
.nav-pick { height: 21px; margin: 4px 0 0 128px; background: #fff; }
.nav-gap { height: 42px; }
.nav-band { height: 26px; background: #f0f0f0; border: solid #dfe1e3; border-width: 1px 0; }
.diag-nav nav { margin-top: 48px; padding-left: 36px; display: flex; flex-direction: column; gap: 10px; }
.monitor { min-width: 0; display: flex; flex-direction: column; }
.monitor-tools { grid-template-columns: 39px 38px 40px 42px 39px 39px 80px 46px 78px; padding-left: 4px; }
.toggle.toggle { background: #cdd6e4; border: 1px solid #7f9cca; padding-left: 6px; gap: 5px; }
.params { height: 57px; background: #f0f0f0; display: grid; grid-template-columns: 207px 1fr 95px 77px; grid-template-rows: 26px 26px; padding: 3px 0 4px; border-bottom: 1px solid #dcdcdc; }
.cell { display: flex; align-items: center; gap: 3px; padding-left: 3px; white-space: nowrap; }
.cell > label:not(.tickbox), .cell b { font-weight: 600; color: #222; }
.ruled { border-left: 1px solid #e2e2e2; padding-left: 2px; }
.group label { width: 65px; }
.group input { width: 39px; height: 15px; padding: 0 3px; background: #fff; border: 1px solid #e9e9e9; }
.dots { width: 12px; height: 15px; border: 1px solid #d2d2d2; justify-content: center; color: #888; }
.select { width: 64px; height: 15px; border: 1px solid #e6e6e6; display: flex; align-items: center; justify-content: space-between; padding: 0 4px 0 1px; }
.select select { appearance: none; width: 48px; color: #666; }
.select svg { color: #222; }
.spin { width: 34px; height: 19px; background: #fff; display: flex; justify-content: space-between; padding: 2px 1px 2px 2px; }
.spin input { width: 22px; }
.spin > span { display: flex; flex-direction: column; justify-content: space-between; padding: 1px 0; }
.faint { opacity: .5; }
.tickbox { display: flex; align-items: center; gap: 4px; color: #555; }
.tickbox input { appearance: none; width: 10px; height: 10px; background: #fff; border: 1px solid #e8e8e8; }
.ghost { width: 70px; height: 17px; border: 1px solid #e9e9e9; justify-content: center; color: #d4d4d4; }
.telegrams { flex: 1; background: #fff; }
.telegrams th { height: 16px; }
.b-idx { width: 22px; }
.b-time { width: 76px; }
.b-serv { width: 44px; }
.b-flags { width: 48px; }
.b-prio { width: 38px; }
.b-addr { width: 45px; }
.b-name { width: 132px; }
.b-hop { width: 20px; }
.b-type { width: 35px; }
.monitor-foot { height: 19px; margin-bottom: 1px; background: #f4f6f8; border: solid #e2e4e6; border-width: 1px 0; display: flex; align-items: center; padding-left: 13px; gap: 3px; }
.monitor-foot button { width: 14px; height: 15px; background: #fff; border: 1px solid #e2e2e2; justify-content: center; }
.count { border-left: 1px solid #d5d5d5; margin-left: 3px; padding-left: 6px; }

.side { display: flex; flex-direction: column; background: #f3f5f8; border: 1px solid #e0e2e4; border-top-color: #ccc; font-size: 8px; line-height: 12px; color: #555; }
.side-head { height: 21px; display: flex; align-items: center; gap: 3px; padding: 0 2px 0 4px; }
.side-tabs { height: 34px; display: grid; grid-template-columns: 51px 52px 52px; border-bottom: 1px solid #e2e4e6; }
.side-tabs button { flex-direction: column; gap: 2px; padding-top: 3px; font-size: 7px; line-height: 10px; color: #444; }
.side-tabs .on { background: #fff; border-right: 1px solid #e2e4e6; height: 34px; }
.side-body { flex: 1; background: #fff; display: grid; place-items: center; font-size: 9px; color: #888; border-bottom: 1px solid #dfe1e3; }
.side-links { height: 97px; display: grid; grid-auto-rows: 1fr; }
.side-links a { display: flex; align-items: center; gap: 4px; padding-left: 4px; }

.statusbar { height: 16px; background: #f0f0f0; border-top: 1px solid #d0d2d4; display: grid; grid-template-columns: 1fr 1fr 1fr 33px; align-items: center; font-size: 6px; }
.statusbar span { height: 10px; padding-left: 2px; border-right: 1px solid #d8d8d8; }
.statusbar span:last-child { border: 0; }

.taskbar { height: 30px; background: linear-gradient(90deg, #2c2628, #2e2324 18%, #3b211e 30%, #33201e 55%, #30201f 72%, #272429); position: relative; display: flex; justify-content: center; align-items: center; padding-left: 5px; color: #eee; }
.pinned { display: flex; align-items: center; gap: 9px; }
.task-search { width: 139px; height: 20px; border-radius: 10px; background: #4b3a3b; display: flex; align-items: center; gap: 6px; padding: 0 2px 0 7px; font-size: 8px; }
.task-search input { flex: 1; min-width: 0; }
.task-search input::placeholder { color: #ddd; opacity: 1; }
.art { width: 34px; height: 15px; }
.apps { display: flex; gap: 2px; margin-left: -7px; }
.app { position: relative; width: 26px; height: 26px; justify-content: center; border-radius: 3px; }
.run::after, .front::after { content: ""; position: absolute; left: 11px; bottom: 0; width: 4px; height: 2px; border-radius: 1px; background: #9b9190; }
.front { background: #443433; }
.front::after { left: 8px; width: 10px; background: #e8836a; }
.tray { position: absolute; right: 13px; top: 0; height: 30px; display: flex; align-items: center; gap: 9px; }
.net { display: flex; gap: 6px; margin-left: 1px; }
.time { display: flex; flex-direction: column; align-items: flex-end; width: 33px; white-space: nowrap; }
.badge { width: 10px; height: 10px; margin-left: -5px; border-radius: 5px; background: #ed8160; color: #46251c; text-align: center; }
</style>
